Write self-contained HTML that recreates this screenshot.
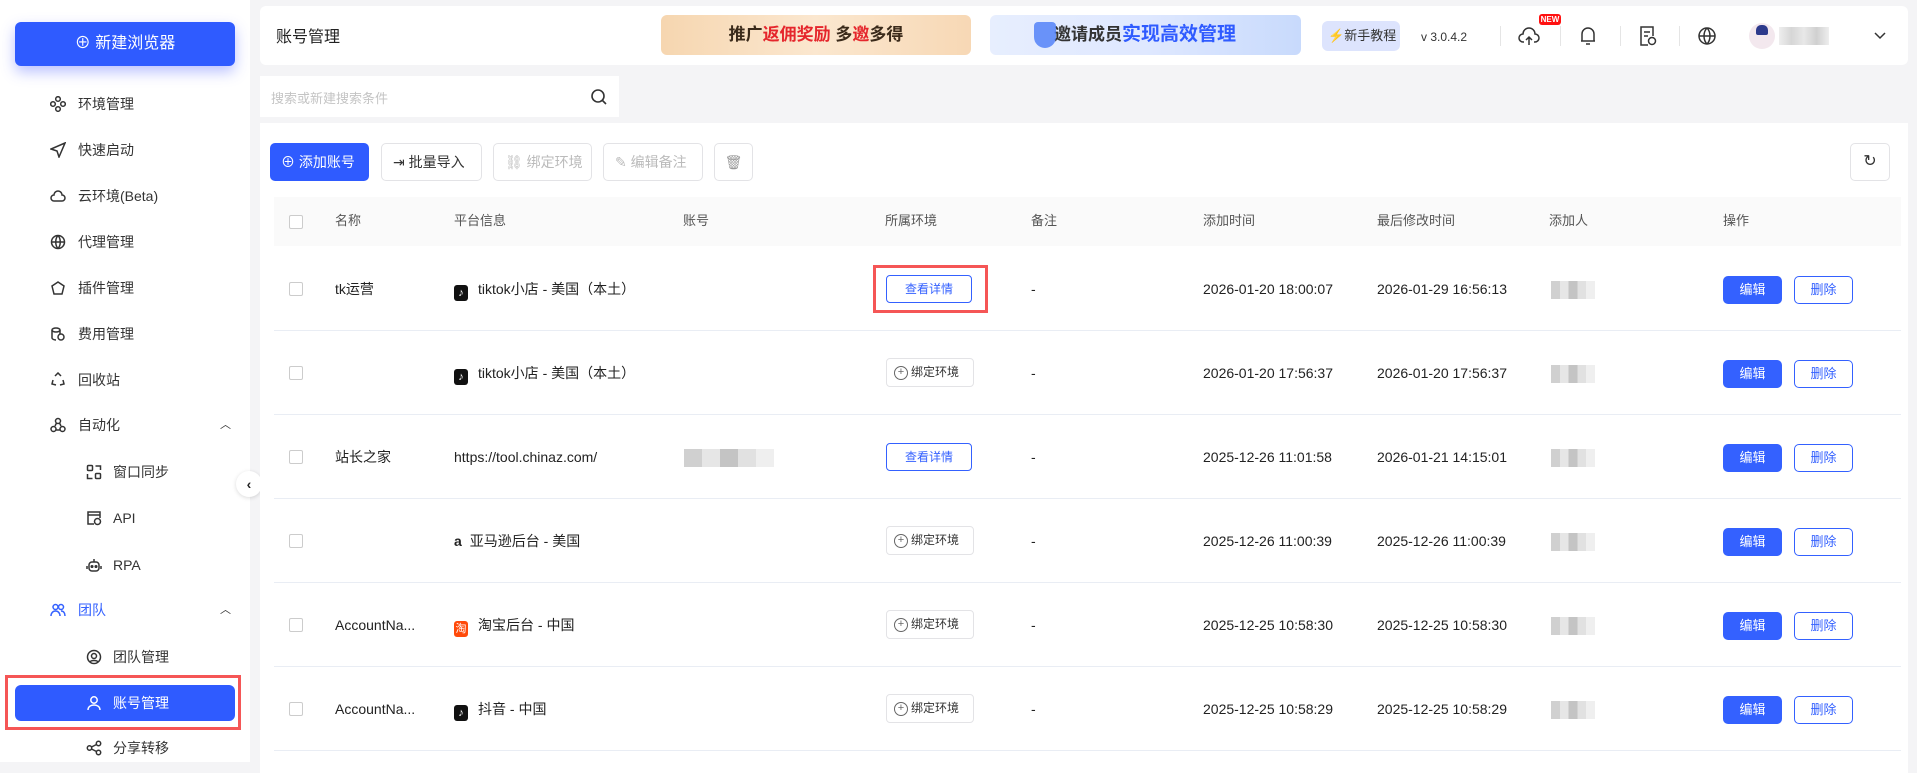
<!DOCTYPE html>
<html><head><meta charset="utf-8"><style>
*{box-sizing:border-box;margin:0;padding:0}
body{width:1917px;height:762px;overflow:hidden;background:#f4f4f6;font-family:"Liberation Sans","Noto Sans CJK SC",sans-serif;color:#222;font-size:14px;position:relative}
.a{position:absolute}
.side{left:0;top:0;width:250px;height:762px;background:#fff}
.mi{position:absolute;left:0;width:250px;height:30px;line-height:30px;font-size:14px;color:#333}
.mi svg{position:absolute;top:7px;width:16px;height:16px;fill:none;stroke:#333;stroke-width:1.5}
.panel{background:#fff;border-radius:6px}
.btn{position:absolute;top:143px;height:38px;border:1px solid #e3e3e6;border-radius:5px;background:#fff;font-size:14px;line-height:36px;color:#333}
.btn.dis{color:#bbb}
.th{position:absolute;top:210px;font-size:13px;color:#555}
.row{position:absolute;left:274px;width:1627px;height:84px;border-bottom:1px solid #e9edf4}
.c{position:absolute;font-size:14px;color:#222;top:0;line-height:84px;white-space:nowrap}
.cb{position:absolute;left:15px;top:35px;width:14px;height:14px;border:1px solid #ccc;border-radius:2px;background:#fff}
.vb{position:absolute;left:612px;top:28px;width:86px;height:28px;border:1px solid #3461ff;border-radius:4px;color:#3461ff;font-size:12px;text-align:center;line-height:26px}
.bb{position:absolute;left:612px;top:27px;width:88px;height:29px;border:1px solid #e3e3e6;border-radius:4px;color:#333;font-size:12px;line-height:27px;padding-left:24px}
.bb:before{content:"+";position:absolute;left:7px;top:7px;width:12px;height:12px;border:1px solid #666;border-radius:50%;font-size:11px;line-height:11px;text-align:center;color:#666}
.eb{position:absolute;left:1449px;top:29px;width:59px;height:28px;background:#3461ff;border-radius:5px;color:#fff;font-size:13px;text-align:center;line-height:28px}
.db{position:absolute;left:1520px;top:29px;width:59px;height:28px;border:1px solid #3461ff;border-radius:5px;color:#3461ff;font-size:13px;text-align:center;line-height:26px}
.blur{position:absolute;top:34px;height:18px;background:linear-gradient(90deg,#c8c8c8 0 20%,#e2e2e2 20% 40%,#b9b9b9 40% 60%,#dcdcdc 60% 80%,#ececec 80%);opacity:.85}
.tk{display:inline-block;width:14px;height:16px;background:#111;border-radius:3px;vertical-align:-2px;margin-right:10px;color:#fff;font-size:11px;line-height:16px;text-align:center}
</style></head><body>

<div class="a side"></div>
<div class="a" style="left:15px;top:22px;width:220px;height:44px;background:#2f5bff;border-radius:6px;box-shadow:0 6px 14px rgba(60,80,255,.35);color:#fff;font-size:16px;text-align:center;line-height:44px">⊕ 新建浏览器</div>

<div class="mi" style="top:89px"><svg style="left:50px" viewBox="0 0 16 16"><circle cx="8" cy="3" r="2.3"/><circle cx="8" cy="13" r="2.3"/><circle cx="3" cy="8" r="2.3"/><circle cx="13" cy="8" r="2.3"/></svg><span class="a" style="left:78px">环境管理</span></div>
<div class="mi" style="top:135px"><svg style="left:50px" viewBox="0 0 16 16"><path d="M15 1L1 7l6 2 2 6z"/></svg><span class="a" style="left:78px">快速启动</span></div>
<div class="mi" style="top:181px"><svg style="left:50px" viewBox="0 0 16 16"><path d="M4 13h8a3 3 0 0 0 0-6 4 4 0 0 0-8 0 3 3 0 0 0 0 6z"/></svg><span class="a" style="left:78px">云环境(Beta)</span></div>
<div class="mi" style="top:227px"><svg style="left:50px" viewBox="0 0 16 16"><circle cx="8" cy="8" r="6.5"/><path d="M1.5 8h13M8 1.5c-3 3-3 10 0 13M8 1.5c3 3 3 10 0 13"/></svg><span class="a" style="left:78px">代理管理</span></div>
<div class="mi" style="top:273px"><svg style="left:50px" viewBox="0 0 16 16"><path d="M2 6l6-4 6 4-2 8H4z"/></svg><span class="a" style="left:78px">插件管理</span></div>
<div class="mi" style="top:319px"><svg style="left:50px" viewBox="0 0 16 16"><ellipse cx="6" cy="4" rx="4" ry="2"/><path d="M2 4v8c0 1 2 2 4 2M10 4v4"/><circle cx="11" cy="11" r="3"/></svg><span class="a" style="left:78px">费用管理</span></div>
<div class="mi" style="top:365px"><svg style="left:50px" viewBox="0 0 16 16"><path d="M5 4l3-3 3 3M13 8l1 4-4 1M3 8l-1 4 4 1"/></svg><span class="a" style="left:78px">回收站</span></div>
<div class="mi" style="top:410px"><svg style="left:50px" viewBox="0 0 16 16"><circle cx="8" cy="4" r="2.5"/><circle cx="3.5" cy="12" r="2.5"/><circle cx="12.5" cy="12" r="2.5"/><path d="M6 13h4M5 9l1.5-3M11 9 9.5 6"/></svg><span class="a" style="left:78px">自动化</span><span class="a" style="left:220px;font-size:11px">︿</span></div>
<div class="mi" style="top:457px"><svg style="left:86px" viewBox="0 0 16 16"><rect x="1.5" y="1.5" width="5" height="5" rx="1"/><rect x="9.5" y="9.5" width="5" height="5" rx="1"/><path d="M9.5 2h5v4M1.5 10v4.5h5"/></svg><span class="a" style="left:113px">窗口同步</span></div>
<div class="mi" style="top:503px"><svg style="left:86px" viewBox="0 0 16 16"><path d="M8 14H2V2h12v6M2 5h12"/><circle cx="11.5" cy="11.5" r="3"/></svg><span class="a" style="left:113px">API</span></div>
<div class="mi" style="top:550px"><svg style="left:86px" viewBox="0 0 16 16"><rect x="3" y="5" width="10" height="9" rx="3"/><path d="M8 2v3M1 9v3M15 9v3"/><circle cx="6" cy="9.5" r=".8"/><circle cx="10" cy="9.5" r=".8"/></svg><span class="a" style="left:113px">RPA</span></div>
<div class="mi" style="top:595px;color:#3461ff"><svg style="left:50px;stroke:#3461ff" viewBox="0 0 16 16"><circle cx="5.5" cy="5" r="2.5"/><circle cx="11" cy="5" r="2.5"/><path d="M1 14c0-3 2-5 4.5-5s4.5 2 4.5 5M11 9c2.5 0 4 2 4 5"/></svg><span class="a" style="left:78px">团队</span><span class="a" style="left:220px;font-size:11px;color:#333">︿</span></div>
<div class="mi" style="top:642px"><svg style="left:86px" viewBox="0 0 16 16"><circle cx="8" cy="8" r="6.5"/><circle cx="8" cy="7" r="2.5"/><path d="M4 13c1-2 7-2 8 0"/></svg><span class="a" style="left:113px">团队管理</span></div>
<div class="a" style="left:5px;top:675px;width:236px;height:55px;border:3px solid #f55656"></div>
<div class="a" style="left:15px;top:685px;width:220px;height:36px;background:#2f5bff;border-radius:6px"></div>
<div class="mi" style="top:688px;color:#fff"><svg style="left:86px;stroke:#fff" viewBox="0 0 16 16"><circle cx="8" cy="5" r="3.2"/><path d="M2 15c0-3.5 3-5 6-5s6 1.5 6 5"/></svg><span class="a" style="left:113px">账号管理</span></div>
<div class="mi" style="top:733px"><svg style="left:86px" viewBox="0 0 16 16"><circle cx="3.5" cy="8" r="2.2"/><circle cx="12.5" cy="3.5" r="2.2"/><circle cx="12.5" cy="12.5" r="2.2"/><path d="M5.5 7l5-2.5M5.5 9l5 2.5"/></svg><span class="a" style="left:113px">分享转移</span></div>
<div class="a" style="left:236px;top:471px;width:26px;height:26px;border-radius:50%;background:#fff;box-shadow:0 1px 4px rgba(0,0,0,.15);text-align:center;line-height:26px;font-size:14px;font-weight:bold">‹</div>

<!-- header -->
<div class="a panel" style="left:260px;top:6px;width:1648px;height:59px"></div>
<div class="a" style="left:276px;top:26px;font-size:16px;line-height:24px">账号管理</div>
<div class="a" style="left:661px;top:15px;width:310px;height:40px;border-radius:6px;background:linear-gradient(90deg,#f6d6b0,#fbe7cf,#f7d8b5);text-align:center;line-height:40px;font-size:17px;font-weight:bold;color:#3a2a1a">推广<span style="color:#e5262c">返佣奖励</span> 多<span style="color:#e5262c">邀</span>多得</div>
<div class="a" style="left:990px;top:15px;width:311px;height:40px;border-radius:6px;background:linear-gradient(90deg,#e7eefe,#dfe8ff,#c8dafc);line-height:40px;font-size:17px;font-weight:bold;color:#333;padding-left:64px">邀请成员<span style="color:#2f5bff;font-size:19px">实现高效管理</span></div>
<div class="a" style="left:1034px;top:22px;width:22px;height:26px;background:#4a7cf8;border-radius:4px 4px 11px 11px;opacity:.8"></div>
<div class="a" style="left:1322px;top:21px;width:78px;height:30px;border-radius:6px;background:#dde4fd;font-size:13px;line-height:30px;color:#333;padding-left:6px"><span style="color:#3b82f6">⚡</span>新手教程</div>
<div class="a" style="left:1421px;top:30px;font-size:12px;color:#333">v 3.0.4.2</div>
<div class="a" style="left:1500px;top:26px;width:1px;height:20px;background:#e5e5e5"></div>
<div class="a" style="left:1560px;top:26px;width:1px;height:20px;background:#e5e5e5"></div>
<div class="a" style="left:1620px;top:26px;width:1px;height:20px;background:#e5e5e5"></div>
<div class="a" style="left:1679px;top:26px;width:1px;height:20px;background:#e5e5e5"></div>
<svg class="a" style="left:1518px;top:25px" width="22" height="22" viewBox="0 0 22 22" fill="none" stroke="#333" stroke-width="1.5"><path d="M6 17H5a4 4 0 0 1 0-8 6 6 0 0 1 12 0 4 4 0 0 1 0 8h-1M11 20v-8M8 15l3-3 3 3"/></svg>
<div class="a" style="left:1539px;top:14px;width:22px;height:11px;background:#f11;border-radius:3px;color:#fff;font-size:8px;font-weight:bold;text-align:center;line-height:11px">NEW</div>
<svg class="a" style="left:1578px;top:25px" width="20" height="22" viewBox="0 0 20 22" fill="none" stroke="#333" stroke-width="1.5"><path d="M4 16V9a6 6 0 0 1 12 0v7H3h14M8 19h4"/></svg>
<svg class="a" style="left:1638px;top:25px" width="20" height="22" viewBox="0 0 20 22" fill="none" stroke="#333" stroke-width="1.5"><path d="M10 20H3V2h12v9M6 7h6M6 11h4"/><circle cx="14" cy="16" r="3.5"/></svg>
<svg class="a" style="left:1697px;top:26px" width="20" height="20" viewBox="0 0 20 20" fill="none" stroke="#333" stroke-width="1.5"><circle cx="10" cy="10" r="8"/><path d="M2 10h16M10 2c-4 4-4 12 0 16M10 2c4 4 4 12 0 16"/></svg>
<div class="a" style="left:1749px;top:23px;width:26px;height:26px;border-radius:50%;background:#f3e8ee"></div>
<div class="a" style="left:1756px;top:25px;width:12px;height:10px;border-radius:5px 5px 2px 2px;background:#2d3a8c"></div>
<div class="a" style="left:1779px;top:27px;width:50px;height:18px;background:linear-gradient(90deg,#eee,#d6d6d6,#e8e8e8,#d0d0d0,#eee)"></div>
<svg class="a" style="left:1873px;top:31px" width="14" height="10" viewBox="0 0 14 10" fill="none" stroke="#333" stroke-width="1.5"><path d="M2 2l5 5 5-5"/></svg>

<!-- search -->
<div class="a" style="left:260px;top:76px;width:359px;height:41px;background:#fff"></div>
<div class="a" style="left:271px;top:88px;font-size:13px;color:#c4c4c4">搜索或新建搜索条件</div>
<svg class="a" style="left:590px;top:88px" width="18" height="18" viewBox="0 0 18 18" fill="none" stroke="#333" stroke-width="1.6"><circle cx="8" cy="8" r="6"/><path d="M12.5 12.5l3.5 3.5"/></svg>

<!-- content -->
<div class="a" style="left:260px;top:123px;width:1648px;height:650px;background:#fff"></div>
<div class="btn" style="left:270px;width:99px;background:#2f5bff;border-color:#2f5bff;color:#fff;padding-left:10px">⊕ 添加账号</div>
<div class="btn" style="left:381px;width:101px;padding-left:11px">⇥ 批量导入</div>
<div class="btn dis" style="left:493px;width:99px;padding-left:11px">⛓ 绑定环境</div>
<div class="btn dis" style="left:603px;width:100px;padding-left:11px">✎ 编辑备注</div>
<div class="btn dis" style="left:714px;width:39px;text-align:center;color:#999">🗑</div>
<div class="btn" style="left:1850px;width:40px;text-align:center;font-size:16px">↻</div>

<div class="a" style="left:274px;top:197px;width:1627px;height:49px;background:#fafafa"></div>
<div class="a" style="left:289px;top:215px;width:14px;height:14px;border:1px solid #ccc;border-radius:2px;background:#fff"></div>
<div class="th" style="left:335px">名称</div>
<div class="th" style="left:454px">平台信息</div>
<div class="th" style="left:683px">账号</div>
<div class="th" style="left:885px">所属环境</div>
<div class="th" style="left:1031px">备注</div>
<div class="th" style="left:1203px">添加时间</div>
<div class="th" style="left:1377px">最后修改时间</div>
<div class="th" style="left:1549px">添加人</div>
<div class="th" style="left:1723px">操作</div>

<div class="row" style="top:247px"><div class="cb"></div><div class="c" style="left:61px">tk运营</div><div class="c" style="left:180px"><span class="tk">♪</span>tiktok小店 - 美国（本土）</div><div class="vb">查看详情</div><div class="c" style="left:757px">-</div><div class="c" style="left:929px">2026-01-20 18:00:07</div><div class="c" style="left:1103px">2026-01-29 16:56:13</div><div class="blur" style="left:1277px;width:44px"></div><div class="eb">编辑</div><div class="db">删除</div></div>
<div class="row" style="top:331px"><div class="cb"></div><div class="c" style="left:180px"><span class="tk">♪</span>tiktok小店 - 美国（本土）</div><div class="bb">绑定环境</div><div class="c" style="left:757px">-</div><div class="c" style="left:929px">2026-01-20 17:56:37</div><div class="c" style="left:1103px">2026-01-20 17:56:37</div><div class="blur" style="left:1277px;width:44px"></div><div class="eb">编辑</div><div class="db">删除</div></div>
<div class="row" style="top:415px"><div class="cb"></div><div class="c" style="left:61px">站长之家</div><div class="c" style="left:180px">https://tool.chinaz.com/</div><div class="blur" style="left:410px;width:90px"></div><div class="vb">查看详情</div><div class="c" style="left:757px">-</div><div class="c" style="left:929px">2025-12-26 11:01:58</div><div class="c" style="left:1103px">2026-01-21 14:15:01</div><div class="blur" style="left:1277px;width:44px"></div><div class="eb">编辑</div><div class="db">删除</div></div>
<div class="row" style="top:499px"><div class="cb"></div><div class="c" style="left:180px"><span style="font-weight:bold;margin-right:8px">a</span>亚马逊后台 - 美国</div><div class="bb">绑定环境</div><div class="c" style="left:757px">-</div><div class="c" style="left:929px">2025-12-26 11:00:39</div><div class="c" style="left:1103px">2025-12-26 11:00:39</div><div class="blur" style="left:1277px;width:44px"></div><div class="eb">编辑</div><div class="db">删除</div></div>
<div class="row" style="top:583px"><div class="cb"></div><div class="c" style="left:61px">AccountNa...</div><div class="c" style="left:180px"><span class="tk" style="background:#ff4a0a">淘</span>淘宝后台 - 中国</div><div class="bb">绑定环境</div><div class="c" style="left:757px">-</div><div class="c" style="left:929px">2025-12-25 10:58:30</div><div class="c" style="left:1103px">2025-12-25 10:58:30</div><div class="blur" style="left:1277px;width:44px"></div><div class="eb">编辑</div><div class="db">删除</div></div>
<div class="row" style="top:667px"><div class="cb"></div><div class="c" style="left:61px">AccountNa...</div><div class="c" style="left:180px"><span class="tk">♪</span>抖音 - 中国</div><div class="bb">绑定环境</div><div class="c" style="left:757px">-</div><div class="c" style="left:929px">2025-12-25 10:58:29</div><div class="c" style="left:1103px">2025-12-25 10:58:29</div><div class="blur" style="left:1277px;width:44px"></div><div class="eb">编辑</div><div class="db">删除</div></div>

<div class="a" style="left:873px;top:265px;width:115px;height:48px;border:3px solid #f55656"></div>
</body></html>
